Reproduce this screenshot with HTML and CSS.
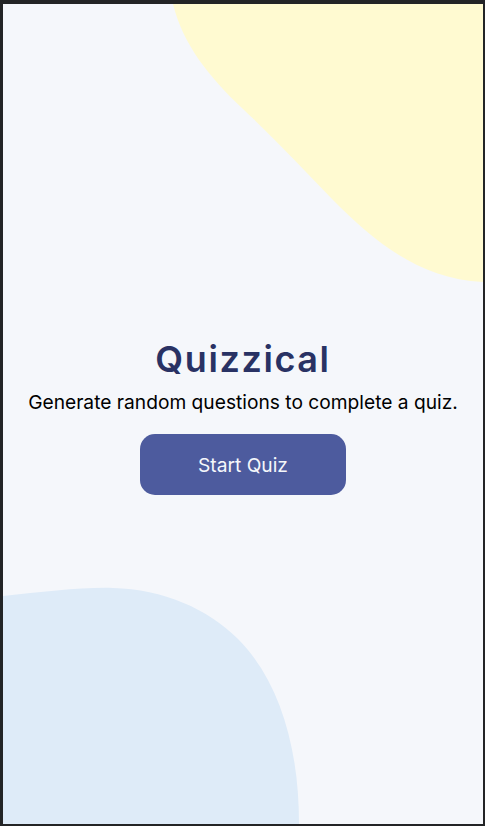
FILE: index.html
```html
<!DOCTYPE html>
<html lang="en">
<head>
<meta charset="utf-8">
<title>Quizzical</title>
<link rel="stylesheet" href="styles.css">
</head>
<body>
<div class="frame">
  <svg class="blob blob-yellow" width="480" height="300" viewBox="0 0 480 300" aria-hidden="true">
    <path d="M170 0 C180 40 205 72 240 105 C270 133 300 165 330 196 C370 236 415 275 480 278 L480 0 Z" fill="#FFFAD1"/>
  </svg>
  <svg class="blob blob-blue" width="300" height="240" viewBox="0 580 300 240" aria-hidden="true">
    <path d="M0 592 C40 588 80 583 110 584 C160 585 205 605 235 635 C275 675 296 740 296 820 L0 820 Z" fill="#DEEBF8"/>
  </svg>
  <main class="intro">
    <h1 class="title">Quizzical</h1>
    <p class="subtitle">Generate random questions to complete a quiz.</p>
    <button class="start-btn" type="button">Start Quiz</button>
  </main>
</div>
</body>
</html>
```
FILE: styles.css
```css
* { box-sizing: border-box; }
html, body { margin: 0; padding: 0; }
body {
  width: 485px;
  height: 826px;
  background: #232426;
  font-family: Inter, "Noto Sans", sans-serif;
}
.frame {
  position: relative;
  width: 485px;
  height: 826px;
  border-style: solid;
  border-color: #232426;
  border-width: 4px 2px 2px 3px;
  background: #F5F7FB;
  overflow: hidden;
}
.blob { position: absolute; display: block; }
.blob-yellow { top: 0; right: 0; }
.blob-blue { left: 0; bottom: 0; }
.intro {
  position: relative;
  height: 100%;
  display: flex;
  flex-direction: column;
  align-items: center;
  justify-content: center;
  padding-top: 4px;
}
.title {
  margin: 0;
  font-size: 36px;
  font-weight: 600;
  letter-spacing: 1.6px;
  color: #293264;
  line-height: 44px;
}
.subtitle {
  margin: 9px 0 0;
  font-size: 19.2px;
  line-height: 24px;
  color: #000;
}
.start-btn {
  margin-top: 20px;
  width: 206px;
  height: 61px;
  border: none;
  border-radius: 15px;
  background: #4D5B9E;
  color: #F5F7FB;
  font-family: Inter, "Noto Sans", sans-serif;
  font-size: 19.2px;
}
```
